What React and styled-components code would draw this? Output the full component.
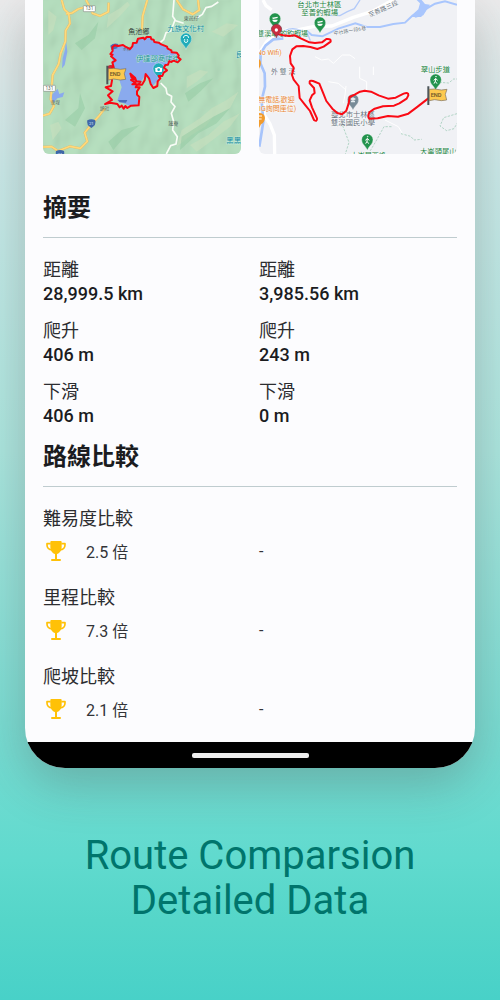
import React from 'react';
import styled, { createGlobalStyle } from 'styled-components';

const GlobalStyle = createGlobalStyle`
    * {
        box-sizing: border-box;
    }
    body {
        margin: 0;
        font-family: Roboto, "Noto Sans CJK TC", sans-serif;
        color: #1b1c1f;
    }
`;

const Page = styled.main`
    min-height: 100vh;
    display: flex;
    flex-direction: column;
    padding: 0 5%;
    overflow: hidden;
    background: linear-gradient(180deg, #ebebec 0%, #c9e9e8 17%, #aae5de 45%, #74dbd1 75%, #60dace 86%, #55d6c9 92%, #48d1c8 100%);
`;

const Phone = styled.section`
    overflow: hidden;
    border-radius: 0 0 40px 40px;
    background-color: #fcfcfe;
    box-shadow: 0 16px 48px rgba(80, 60, 60, 0.28);
`;

const Screen = styled.div`
    padding: 0 18px 13px;
`;

const Columns = styled.div`
    display: grid;
    grid-template-columns: 1fr 1fr;
    column-gap: 18px;
`;

const Map = styled.svg`
    display: block;
    width: 100%;
    height: auto;
    border-radius: 0 0 6px 6px;
    font-family: Roboto, "Noto Sans CJK TC", sans-serif;
    font-weight: 400;
`;

const Title = styled.h2`
    margin: 0;
    padding: ${(props) => (props.$first ? '36px 0 11px' : '11px 0 11px')};
    font-size: 24px;
    line-height: 36px;
    font-weight: 700;
`;

const Divider = styled.hr`
    height: 1px;
    margin: 0 0 20px;
    border: none;
    background-color: #bfcccf;
`;

const Stats = styled(Columns)`
    row-gap: 13px;
`;

const Stat = styled.dl`
    margin: 0;
    line-height: 24px;
    font-size: 18px;
`;

const Label = styled.dt`
    color: #2c2d30;
`;

const Value = styled.dd`
    margin: 0;
    font-weight: 500;
`;

const Comparisons = styled.div`
    display: grid;
    row-gap: 15px;
`;

const CompareLabel = styled.h3`
    margin: 0;
    font-size: 18px;
    line-height: 24px;
    font-weight: 400;
    color: #2c2d30;
`;

const Result = styled.div`
    display: flex;
    align-items: center;
    gap: 18px;
    height: 40px;
    font-size: 16px;
    color: #333437;
`;

const TrophyIcon = styled.svg`
    width: 24px;
    height: 24px;
    margin-left: 1px;
    color: #ffc107;
`;

const NavBar = styled.div`
    display: flex;
    justify-content: center;
    align-items: center;
    height: 26px;
    background-color: #000;
`;

const Handle = styled.span`
    width: 26%;
    height: 5px;
    border-radius: 2px;
    background-color: #ededed;
`;

const Headline = styled.h1`
    margin: 65px 0 0;
    text-align: center;
    font-size: 40px;
    line-height: 45px;
    font-weight: 400;
    color: #00756c;
`;

const stats = [
    { label: '距離', values: ['28,999.5 km', '3,985.56 km'] },
    { label: '爬升', values: ['406 m', '243 m'] },
    { label: '下滑', values: ['406 m', '0 m'] },
];

const comparisons = [
    { label: '難易度比較', ratio: '2.5 倍' },
    { label: '里程比較', ratio: '7.3 倍' },
    { label: '爬坡比較', ratio: '2.1 倍' },
];

function Trophy() {
    return (
        <TrophyIcon viewBox="-6 -6 72 72" aria-hidden="true">
            <path d="M16 0H44Q47 0 47 3V17C47 29 40 37 33 39V54H42Q45 54 45 57T42 60H18Q15 60 15 57T18 54H27V39C20 37 13 29 13 17V3Q13 0 16 0Z" fill="currentColor" />
            <path d="M14 8H3V12C3 20 9 26 19 27M46 8H57V12C57 20 51 26 41 27" fill="none" stroke="currentColor" strokeWidth="5" strokeLinejoin="round" />
        </TrophyIcon>
    );
}

function Pin({ x, y, color, children }) {
    return (
        <g transform={`translate(${x} ${y})`}>
            <path
                d="M0 27C-3 14-17 10-17-5A17 17 0 0 1 17-5C17 10 3 14 0 27Z"
                fill={color}
                stroke="#fff"
                strokeWidth="1"
            />
            {children}
        </g>
    );
}

function Hiker() {
    return (
        <g stroke="#fff" strokeWidth="3" fill="none">
            <circle cx="1" cy="-14" r="1" />
            <path d="M0-9L-1 0L-5 7M-1 0L4 7M-6-3L0-8L6-3" />
        </g>
    );
}

function Shrimp() {
    return <path d="M-9-8L8-11V-7L-6-4Z M-8-2H8C8 7-8 7-8-2Z" fill="#fff" />;
}

function EndFlag({ x, y }) {
    return (
        <g transform={`translate(${x} ${y})`}>
            <path d="M1-5V51" stroke="#4c5558" strokeWidth="6" />
            <path d="M4 4L20 3L40 6L57 4L52 19L56 36L40 38L20 35L4 38Z" fill="#fdc94f" stroke="#7a7060" strokeWidth="2" />
            <text x="8" y="27" fontSize="17" fontWeight="500" fill="#6b5427">END</text>
        </g>
    );
}

function RoadSign({ x, y }) {
    return (
        <g transform={`translate(${x} ${y})`}>
            <rect width="36" height="18" rx="2" fill="#fff" stroke="#879188" strokeWidth="2" />
            <text x="18" y="14" textAnchor="middle" fontSize="14" fill="#515c56">131</text>
        </g>
    );
}

function Shield({ x, y }) {
    return (
        <g transform={`translate(${x} ${y})`}>
            <path d="M-12-9Q0-15 12-9Q16 5 0 14Q-16 5-12-9Z" fill="#3e67a8" />
            <text y="6" textAnchor="middle" fontSize="13" fill="#dce8f6">21</text>
        </g>
    );
}

function LakeMap() {
    return (
        <Map viewBox="39 0 594 462" role="img" aria-label="魚池鄉">
            <defs>
                <filter id="relief" x="0" y="0" width="100%" height="100%">
                    <feTurbulence type="fractalNoise" baseFrequency="0.016 0.011" numOctaves="2" seed="8" />
                    <feDiffuseLighting surfaceScale="14" diffuseConstant="1" lightingColor="#c4e8ca">
                        <feDistantLight azimuth="215" elevation="62" />
                    </feDiffuseLighting>
                </filter>
            </defs>
            <rect x="39" width="594" height="462" fill="#b0dcba" />
            <rect x="39" width="594" height="462" filter="url(#relief)" opacity="0.3" />
            <g fill="#c9dfbe" opacity="0.6">
                <path d="M455 390L510 355L545 325L590 300L625 275L600 325L550 350L525 380L485 405L440 440Z" />
                <path d="M480 435L535 405L580 365L630 340L600 380L548 420L500 455Z" />
                <path d="M470 230L510 210L535 215L500 245L470 265Z" />
                <path d="M235 45L270 25L292 5L300 15L270 48L230 85Z" />
                <path d="M55 30L80 50L70 90L55 105Z" />
                <path d="M60 375L85 365L95 385L68 420Z" />
                <path d="M545 95L590 70L625 75L580 110Z" />
            </g>
            <g fill="#91c9a1" opacity="0.5">
                <path d="M455 410L510 375L550 350L600 325L560 370L505 400L450 450Z" />
                <path d="M135 130L175 105L205 65L195 115L155 150Z" />
                <path d="M105 360L145 325L150 280L165 325L135 380Z" />
                <path d="M465 280L510 250L550 235L510 275L475 305Z" />
                <path d="M235 425L275 390L330 375L280 415L250 450Z" />
            </g>
            <g fill="#8aaaee">
                <path d="M108 120L112 155L104 195L96 205L98 175L105 150Z" />
                <path d="M65 285L83 266L88 282L103 277L98 291L82 295L68 310Z" />
                <path d="M247 143L262 137L285 140L300 147L310 132L325 118L363 113L372 127L395 134L420 148L440 162L425 183L412 192L400 210L384 240L368 258L348 222L330 250L315 245L322 285L327 312L300 318L262 302L275 262L268 240L270 222L248 200L247 165Z" />
            </g>
            <g fill="none" stroke="#dfb968" strokeWidth="7" strokeLinejoin="round">
                <path d="M95 0L103 28L116 40L120 70L107 92L106 125L92 160L86 192L68 225L62 298L72 318L59 341L39 347" />
                <path d="M108 42L126 39L145 27L166 21M168 0L180 22L188 40L210 48L235 35L236 8M352 0L344 27L338 48L336 90M440 0L459 28L488 43L508 30L504 0" />
                <path d="M225 325L205 350L188 369L164 398L172 424L151 445L120 439L84 453L65 440L39 441" />
            </g>
            <g fill="none" stroke="#ffd97a" strokeWidth="5" strokeLinejoin="round">
                <path d="M95 0L103 28L116 40L120 70L107 92L106 125L92 160L86 192L68 225L62 298L72 318L59 341L39 347" />
                <path d="M108 42L126 39L145 27L166 21M168 0L180 22L188 40L210 48L235 35L236 8M352 0L344 27L338 48L336 90M440 0L459 28L488 43L508 30L504 0" />
                <path d="M225 325L205 350L188 369L164 398L172 424L151 445L120 439L84 453L65 440L39 441" />
            </g>
            <g fill="none" stroke="#f8fcf6" strokeWidth="5" strokeLinejoin="round">
                <path d="M432 0L428 49L437 62L461 70M435 60L423 92L408 98L401 119L390 128M500 54L517 43L528 23L545 19L565 6" />
                <path d="M392 249L408 265L411 281L425 289L423 306L435 320L424 340L431 365L428 390L442 410L438 432L422 437L409 462" />
            </g>
            <RoadSign x={160} y={17} />
            <RoadSign x={40} y={256} />
            <Shield x={184} y={370} />
            <Shield x={90} y={462} />
            <path d="M241 137Q250 128 265 132L262 145L244 150ZM264 300L292 300L288 308L268 307Z" fill="#4a6fbb" />
            <g fill="#56635a" fontSize="15">
                <text x="62" y="312" fontSize="14">車埕</text>
                <text x="210" y="329" fontSize="14">頭社</text>
                <text x="461" y="59">東邑仔</text>
                <text x="415" y="375">蓮庵</text>
                <text x="278" y="154" fontSize="12">水社</text>
                <text x="295" y="102" fontSize="21" fill="#303b35">魚池鄉</text>
            </g>
            <g fill="#168a9b" stroke="#caf0e0" strokeWidth="2" paintOrder="stroke" fontSize="22">
                <text x="412" y="94">九族文化村</text>
                <text x="318" y="184">伊達邵商店街</text>
                <text x="617" y="171">良</text>
                <text x="589" y="429">黑黑</text>
            </g>
            <Pin x={468} y={121} color="#20acba">
                <path d="M-8-7A8 8 0 0 1 8-7M-6 1L-3 6H3L6 1M-4-4V1M4-4V1" fill="none" stroke="#d8f8f6" strokeWidth="3" />
            </Pin>
            <Pin x={386} y={211} color="#20acba">
                <rect x="-10" y="-8" width="20" height="13" rx="2" fill="#fff" />
                <path d="M-4-10H4V-7H-4Z" fill="#fff" />
                <circle cy="-2" r="4" fill="#20acba" />
            </Pin>
            <circle cx="243" cy="207" r="12" fill="#c62c3a" />
            <path
                d="M247 141L254 136L264 138L279 135L286 140L300 147L307 139L309 129L320 128L324 116L340 113L344 118L350 111L362 111L364 118L371 119L373 126L386 128L394 133L411 140L413 146L424 151L425 157L440 158L446 166L444 172L452 178L443 187L431 182L423 186L418 183L414 194L406 195L402 203L411 211L401 218L397 228L386 228L391 235L383 244L382 258L370 264L362 252L357 235L347 222L344 241L336 254L325 254L332 245L319 244L315 233L301 221L305 233L313 239L303 240L316 248L307 253L322 253L317 262L329 262L321 274L321 284L328 291L326 316L303 317L292 324L286 318L281 326L275 317L269 322L262 312L241 308L225 312L246 300L234 286L248 274L227 262L243 258L246 241L245 205L250 199L247 187L257 181L243 169L248 164L241 162L248 153Z"
                fill="none"
                stroke="#fa0714"
                strokeWidth="6"
                strokeLinejoin="round"
            />
            <EndFlag x={231} y={202} />
        </Map>
    );
}

function TrailMap() {
    return (
        <Map viewBox="27 0 594 462" role="img" aria-label="外雙溪">
            <rect x="27" width="594" height="462" fill="#f0f1f5" />
            <g fill="none" stroke="#fff" strokeWidth="10" strokeLinejoin="round">
                <path d="M39 0L48 17L65 30M27 160L50 125L78 103L110 90L150 88L190 80L246 78L310 52L365 35L410 10L430 0" />
                <path d="M44 300L43 345L60 372L73 405L74 462" />
            </g>
            <g fill="none" stroke="#fff" strokeWidth="3">
                <path d="M195 170L215 180L235 177L250 190L277 165L300 165L315 176M329 200V235L350 245V275M280 310L285 285L288 258M235 245L265 250L288 270M370 200V225M405 360L445 380L460 405" />
            </g>
            <path d="M170 92L185 105L217 109L265 86L316 70L350 81L390 81L430 72L465 68L487 47L512 48L526 28L555 11L585 4L621 14" fill="none" stroke="#a9c6fd" strokeWidth="6" />
            <path d="M485 46L505 28L510 10L500 0L515 0L525 12L540 14L520 46L497 53Z" fill="#a9c6fd" />
            <path d="M236 46L270 47L292 35L313 26L330 0M82 112Q110 75 153 91L172 99L181 122" fill="none" stroke="#b3caf8" strokeWidth="4" />
            <path d="M100 115L70 118L47 136L32 160L31 190L44 220L45 260L35 300L40 365L28 440" fill="none" stroke="#a7c4fb" strokeWidth="8" />
            <path d="M278 377L297 427L286 462M355 462L380 420L402 380L427 380M453 401L482 409L492 420L515 418M621 341L581 353L570 378L590 392L612 386L621 370M568 247L596 249L611 237L621 237" fill="none" stroke="#92c6ae" strokeWidth="2" strokeDasharray="7 4" />
            <g fill="#17813e" stroke="#fff" strokeWidth="2" paintOrder="stroke" fontSize="22">
                <text x="142" y="22">台北市士林區</text>
                <text x="154" y="46">至善釣蝦場</text>
                <text x="22" y="109" fontSize="21">雙溪車 的釣蝦場</text>
                <text x="512" y="216">翠山步道</text>
                <text x="510" y="463">大崙頭尾山</text>
                <text x="302" y="474" fontSize="21">大崙尾西峰</text>
            </g>
            <g fill="#e6802c" stroke="#fff" strokeWidth="2" paintOrder="stroke" fontSize="21">
                <text x="20" y="166">No Wifi)</text>
                <text x="25" y="307">無電話,歡迎</text>
                <text x="27" y="332">IG詢問座位)</text>
            </g>
            <path d="M27 177Q35 184 32 195L27 207ZM27 339Q44 339 45 354Q44 367 33 373L27 384Z" fill="#f29b2c" />
            <path d="M27 348H36M27 357H35" stroke="#fff" strokeWidth="3" />
            <g fill="#65717c" stroke="#fff" strokeWidth="2" paintOrder="stroke" fontSize="21">
                <text x="63" y="223">外 雙 溪</text>
                <text x="243" y="352" fontSize="22">臺北市士林區</text>
                <text x="243" y="375" fontSize="22">雙溪國民小學</text>
                <text transform="translate(359 52) rotate(-24)" fontSize="19">至善路三段</text>
                <text transform="translate(252 106) rotate(-10)" fontSize="15">中社路一段6巷</text>
            </g>
            <Pin x={75} y={61} color="#23934d"><Shrimp /></Pin>
            <Pin x={210} y={73} color="#23934d"><Shrimp /></Pin>
            <Pin x={557} y={244} color="#23934d"><Hiker /></Pin>
            <Pin x={352} y={424} color="#23934d"><Hiker /></Pin>
            <Pin x={309} y={304} color="#778b98">
                <path d="M-9-7L0-12L9-7L0-2ZM-6-2V3H6V-2" fill="#e5edf1" />
            </Pin>
            <path
                d="M79 101L99 106L118 108L134 106L154 116L178 127L195 129L216 127L229 117Q244 115 242 125L221 140L202 147L181 141L160 138L139 139L127 148L120 168L122 190L131 203L126 225L131 239L146 258L149 294L164 313L180 333L192 360Q202 367 201 355L186 322L179 301L186 286L194 279L192 264L179 250Q177 239 189 243L208 251L219 278L229 303L247 326L262 339L276 343L289 332L296 310L299 291L314 284L330 275L344 272L363 275L386 286L414 296L437 293L461 281Q476 276 475 286L470 296L448 310L432 317L399 319L374 326L359 336Q351 350 358 356L383 355L414 348L444 350L475 341L500 322L534 296"
                fill="none"
                stroke="#fa0a14"
                strokeWidth="6"
                strokeLinejoin="round"
                strokeLinecap="round"
            />
            <path d="M79 113C76 101 63 96 64 88A15 15 0 0 1 95 88C95 98 82 101 79 113Z" fill="#c92d41" stroke="#713743" strokeWidth="2" />
            <circle cx="79" cy="90" r="5" fill="#fff" />
            <EndFlag x={534} y={264} />
        </Map>
    );
}

function App() {
    return (
        <>
            <GlobalStyle />
            <Page>
                <Phone>
                    <Screen>
                        <Columns>
                            <LakeMap />
                            <TrailMap />
                        </Columns>

                        <Title $first>摘要</Title>
                        <Divider />
                        <Stats>
                            {stats.map(({ label, values }) =>
                                values.map((value, i) => (
                                    <Stat key={label + i}>
                                        <Label>{label}</Label>
                                        <Value>{value}</Value>
                                    </Stat>
                                ))
                            )}
                        </Stats>

                        <Title>路線比較</Title>
                        <Divider />
                        <Comparisons>
                            {comparisons.map(({ label, ratio }) => (
                                <section key={label}>
                                    <CompareLabel>{label}</CompareLabel>
                                    <Columns>
                                        <Result>
                                            <Trophy />
                                            <span>{ratio}</span>
                                        </Result>
                                        <Result>-</Result>
                                    </Columns>
                                </section>
                            ))}
                        </Comparisons>
                    </Screen>
                    <NavBar>
                        <Handle />
                    </NavBar>
                </Phone>
                <Headline>
                    Route Comparsion
                    <br />
                    Detailed Data
                </Headline>
            </Page>
        </>
    );
}

export default App;
